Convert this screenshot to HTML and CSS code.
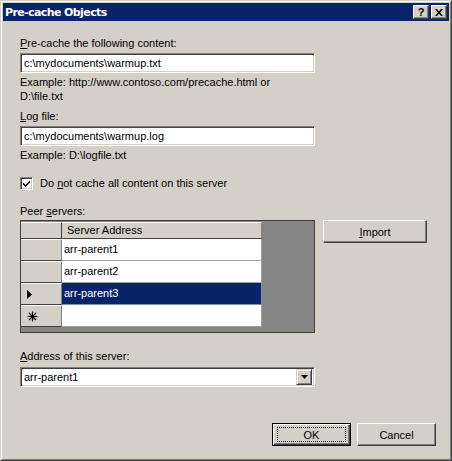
FILE: index.html
```html
<!DOCTYPE html>
<html>
<head>
<meta charset="utf-8">
<link rel="stylesheet" href="styles.css">
</head>
<body>
<div class="window">
  <div class="frame">
    <div class="titlebar">
      <span class="title">Pre-cache Objects</span>
      <div class="tbtns">
        <span class="tbtn help">?</span>
        <span class="tbtn close"><svg width="8" height="7" viewBox="0 0 8 7"><path d="M0 0h2l2 2.5L6 0h2L5 3.5 8 7H6L4 4.5 2 7H0l3-3.5z" fill="#000"/></svg></span>
      </div>
    </div>
    <div class="content">
      <div class="label l1"><u>P</u>re-cache the following content:</div>
      <div class="textbox tb1">c:\mydocuments\warmup.txt</div>
      <div class="hint h1">Example: http://www.contoso.com/precache.html or<br>D:\file.txt</div>
      <div class="label l2"><u>L</u>og file:</div>
      <div class="textbox tb2">c:\mydocuments\warmup.log</div>
      <div class="label h2">Example: D:\logfile.txt</div>
      <div class="checkrow">
        <span class="checkbox"><svg width="9" height="9" viewBox="0 0 9 9"><path d="M1 3.5l2.5 2.5L8 1.5v2L3.5 8 1 5.5z" fill="#000"/></svg></span>
        <span class="checklabel">Do <u>n</u>ot cache all content on this server</span>
      </div>
      <div class="label l3">Peer <u>s</u>ervers:</div>
      <div class="peerrow">
        <div class="grid">
          <div class="rh corner"></div>
          <div class="ch">Server Address</div>
          <div class="rh"></div>
          <div class="cell">arr-parent1</div>
          <div class="rh"></div>
          <div class="cell">arr-parent2</div>
          <div class="rh"><svg width="5" height="9" viewBox="0 0 5 9"><path d="M0 0L5 4.5 0 9z" fill="#000"/></svg></div>
          <div class="cell sel">arr-parent3</div>
          <div class="rh"><svg width="11" height="11" viewBox="0 0 11 11"><path d="M5.5 0.5v10M0.5 5.5h10M2 2l7 7M9 2l-7 7" stroke="#000" stroke-width="1.2"/></svg></div>
          <div class="cell"></div>
        </div>
        <div class="btn import"><u>I</u>mport</div>
      </div>
      <div class="label l4"><u>A</u>ddress of this server:</div>
      <div class="combo">
        <span class="combotext">arr-parent1</span>
        <span class="dropbtn"><svg width="7" height="4" viewBox="0 0 7 4"><path d="M0 0h7L3.5 4z" fill="#000"/></svg></span>
      </div>
      <div class="buttons">
        <div class="btn default"><span class="focus">OK</span></div>
        <div class="btn cancel">Cancel</div>
      </div>
    </div>
  </div>
</div>
</body>
</html>
```
FILE: styles.css
```css
html, body {
  margin: 0;
  padding: 0;
  background: #d4d0c8;
}
body {
  font-family: "Liberation Sans", Arial, sans-serif;
  font-size: 11px;
  color: #000;
}
.window {
  width: 452px;
  height: 461px;
  box-sizing: border-box;
  border: 1px solid;
  border-color: #d4d0c8 #404040 #404040 #d4d0c8;
  background: #d4d0c8;
}
.frame {
  height: 100%;
  box-sizing: border-box;
  border: 1px solid;
  border-color: #fff #808080 #808080 #fff;
  padding: 1px;
  display: flex;
  flex-direction: column;
}
.titlebar {
  height: 18px;
  background: #0a246a;
  display: flex;
  align-items: center;
  justify-content: space-between;
  padding: 0 2px 0 2px;
}
.title {
  color: #fff;
  font-family: "DejaVu Sans", sans-serif;
  font-weight: bold;
  font-size: 11px;
  letter-spacing: -0.6px;
}
.tbtns {
  display: flex;
  gap: 2px;
}
.tbtn {
  width: 16px;
  height: 14px;
  box-sizing: border-box;
  background: #d4d0c8;
  border: 1px solid;
  border-color: #fff #404040 #404040 #fff;
  box-shadow: inset -1px -1px #808080;
  display: flex;
  align-items: center;
  justify-content: center;
  font-weight: bold;
  font-size: 11px;
  line-height: 1;
}
.content {
  flex: 1;
  padding-left: 17px;
  display: flex;
  flex-direction: column;
  align-items: flex-start;
}
.label {
  line-height: 13px;
  height: 13px;
  white-space: nowrap;
}
.l1 { margin-top: 16px; }
.textbox, .combo {
  width: 295px;
  height: 20px;
  box-sizing: border-box;
  background: #fff;
  border: 1px solid;
  border-color: #808080 #fff #fff #808080;
  box-shadow: inset 1px 1px #404040, inset -1px -1px #d4d0c8;
  padding: 0 3px;
  line-height: 18px;
  white-space: nowrap;
}
.tb1 { margin-top: 3px; }
.hint {
  line-height: 14px;
  margin-top: 2px;
}
.l2 { margin-top: 7px; }
.tb2 { margin-top: 3px; }
.h2 { margin-top: 3px; }
.checkrow {
  margin-top: 15px;
  display: flex;
  align-items: center;
  height: 13px;
}
.checkbox {
  width: 13px;
  height: 13px;
  box-sizing: border-box;
  background: #fff;
  border: 1px solid;
  border-color: #808080 #fff #fff #808080;
  box-shadow: inset 1px 1px #404040, inset -1px -1px #d4d0c8;
  display: flex;
  align-items: center;
  justify-content: center;
}
.checklabel {
  margin-left: 7px;
  line-height: 13px;
}
.l3 { margin-top: 15px; }
.peerrow {
  margin-top: 2px;
  display: flex;
  gap: 8px;
  align-items: flex-start;
}
.grid {
  width: 295px;
  height: 113px;
  box-sizing: border-box;
  border: 1px solid #404040;
  background: #858585;
  padding-top: 1px;
  display: grid;
  grid-template-columns: 41px 200px;
  grid-template-rows: 17px repeat(4, 22px);
  align-content: start;
}
.rh {
  background: #d4d0c8;
  box-sizing: border-box;
  border-top: 1px solid #fff;
  border-bottom: 1px solid #404040;
  border-right: 1px solid #808080;
  display: flex;
  align-items: center;
  padding-left: 6px;
}
.corner {
  border-right: 1px solid #404040;
}
.ch {
  background: #d4d0c8;
  box-sizing: border-box;
  border-top: 1px solid #fff;
  border-bottom: 1px solid #404040;
  border-right: 1px solid #808080;
  padding-left: 5px;
  line-height: 15px;
}
.cell {
  background: #fff;
  box-sizing: border-box;
  border-bottom: 1px solid #a0a0a0;
  border-right: 1px solid #a0a0a0;
  padding-left: 2px;
  line-height: 21px;
}
.cell.sel {
  background: #0a246a;
  color: #fff;
  border-color: #8090b0;
}
.btn {
  box-sizing: border-box;
  background: #d4d0c8;
  border: 1px solid;
  border-color: #fff #404040 #404040 #fff;
  box-shadow: inset -1px -1px #808080;
  display: flex;
  align-items: center;
  justify-content: center;
  height: 23px;
}
.import {
  width: 104px;
}
.l4 { margin-top: 17px; }
.combo {
  margin-top: 4px;
  display: flex;
  align-items: center;
  justify-content: space-between;
  padding: 0 2px 0 3px;
}
.dropbtn {
  width: 16px;
  height: 16px;
  box-sizing: border-box;
  background: #d4d0c8;
  border: 1px solid;
  border-color: #d4d0c8 #404040 #404040 #d4d0c8;
  box-shadow: inset 1px 1px #fff, inset -1px -1px #808080;
  display: flex;
  align-items: center;
  justify-content: center;
}
.buttons {
  margin-top: 36px;
  align-self: flex-end;
  margin-right: 13px;
  display: flex;
  gap: 6px;
}
.buttons .btn {
  width: 79px;
}
.default {
  border: 1px solid #000;
  box-shadow: inset 1px 1px #fff, inset -1px -1px #404040, inset -2px -2px #808080;
}
.focus {
  width: 69px;
  height: 15px;
  box-sizing: border-box;
  border: 1px dotted #000;
  display: flex;
  align-items: center;
  justify-content: center;
}
```
